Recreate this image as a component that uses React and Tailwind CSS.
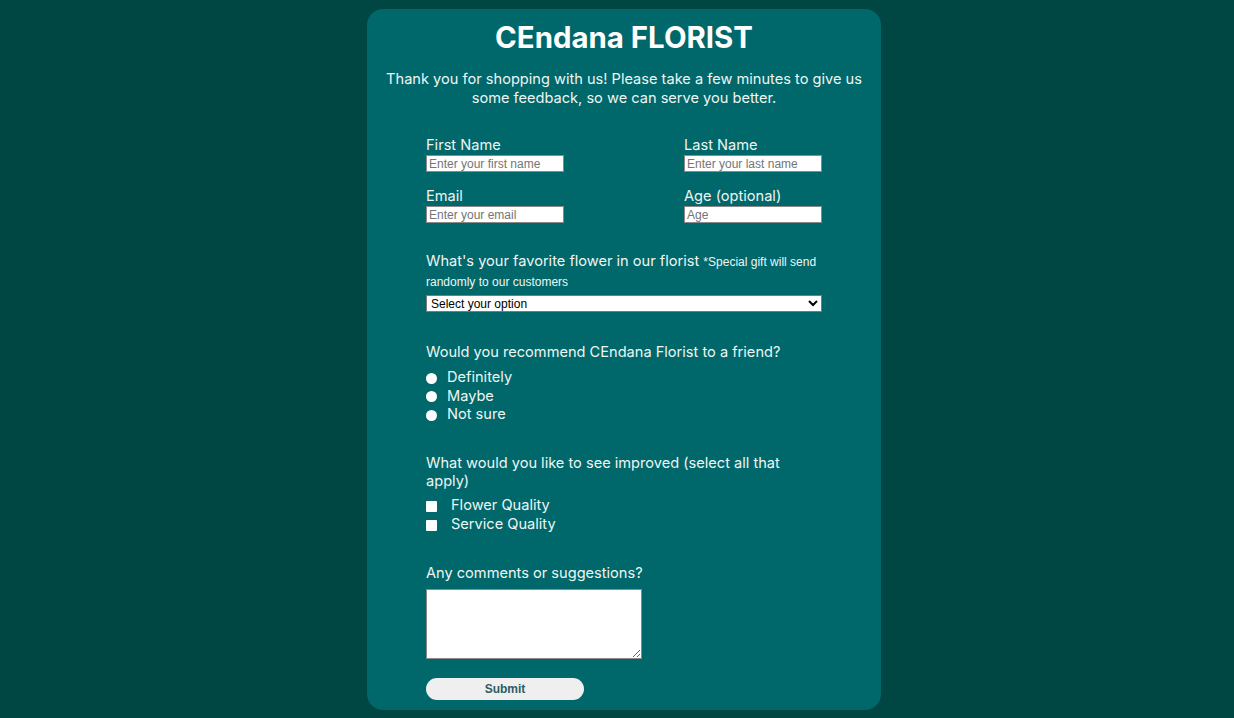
import React from "react";

const inputCls =
  "block w-[138px] h-[17px] bg-white border border-[#8a8a8a] px-[2px] text-[12px] leading-[15px] text-black placeholder:text-[#757575] outline-none";

const arial = { fontFamily: '"Liberation Sans", Arial, sans-serif' };

function Field({ label, placeholder }) {
  return (
    <div className="flex flex-col">
      <label className="text-[14.6px] leading-[19px]">{label}</label>
      <input type="text" placeholder={placeholder} className={inputCls} style={arial} />
    </div>
  );
}

export default function App() {
  return (
    <div
      className="min-h-screen bg-[#004643] flex justify-center pt-[9px] pl-[14px]"
      style={{ fontFamily: 'Inter, "Noto Sans", sans-serif' }}
    >
      <div className="w-[514px] h-[701px] rounded-[16px] bg-[#00676a] text-[#eef6f4] pt-[11px]">
        <h1 className="text-center text-[29.4px] leading-[36px] font-bold text-[#fffffe]">
          CEndana FLORIST
        </h1>
        <p className="mt-[14px] px-[12px] text-center text-[14.6px] leading-[19px]">
          Thank you for shopping with us! Please take a few minutes to give us
          some feedback, so we can serve you better.
        </p>

        <form className="px-[59px] mt-[28px]">
          <div className="grid grid-cols-[258px_138px] gap-y-[15px]">
            <Field label="First Name" placeholder="Enter your first name" />
            <Field label="Last Name" placeholder="Enter your last name" />
            <Field label="Email" placeholder="Enter your email" />
            <Field label="Age (optional)" placeholder="Age" />
          </div>

          <div className="mt-[28px]">
            <label className="block text-[14.6px] leading-[20px]">
              What's your favorite flower in our florist{" "}
              <span className="text-[12px] leading-[12px]" style={arial}>
                *Special gift will send randomly to our customers
              </span>
            </label>
            <select
              className="mt-[4px] block w-full h-[17px] bg-white border border-[#7a7a7a] text-[12px] leading-[15px] text-black"
              style={arial}
              defaultValue=""
            >
              <option value="">Select your option</option>
              <option>Rose</option>
              <option>Tulip</option>
              <option>Orchid</option>
            </select>
          </div>

          <div className="mt-[31px]">
            <p className="text-[14.6px] leading-[19px]">
              Would you recommend CEndana Florist to a friend?
            </p>
            <div className="mt-[7px] flex flex-col">
              {["Definitely", "Maybe", "Not sure"].map((t) => (
                <label key={t} className="flex items-center h-[18.5px] text-[14.6px]">
                  <input
                    type="radio"
                    name="rec"
                    className="appearance-none w-[11px] h-[11px] rounded-full bg-white m-0"
                  />
                  <span className="ml-[10px]">{t}</span>
                </label>
              ))}
            </div>
          </div>

          <div className="mt-[29px]">
            <p className="text-[14.6px] leading-[18.5px]">
              What would you like to see improved (select all that apply)
            </p>
            <div className="mt-[6px] flex flex-col">
              {["Flower Quality", "Service Quality"].map((t) => (
                <label key={t} className="flex items-center h-[19px] text-[14.6px]">
                  <input
                    type="checkbox"
                    className="appearance-none w-[11px] h-[11px] rounded-[1px] bg-white m-0"
                  />
                  <span className="ml-[14px]">{t}</span>
                </label>
              ))}
            </div>
          </div>

          <div className="mt-[29px]">
            <p className="text-[14.6px] leading-[19px]">Any comments or suggestions?</p>
            <textarea className="mt-[6px] block w-[216px] h-[70px] bg-white border border-[#8a8a8a] text-black text-[12px]" />
          </div>

          <button
            type="button"
            className="mt-[19px] block w-[158px] h-[22px] rounded-[11px] bg-[#efefef] text-[12px] font-bold text-[#2d5d61]"
            style={arial}
          >
            Submit
          </button>
        </form>
      </div>
    </div>
  );
}
